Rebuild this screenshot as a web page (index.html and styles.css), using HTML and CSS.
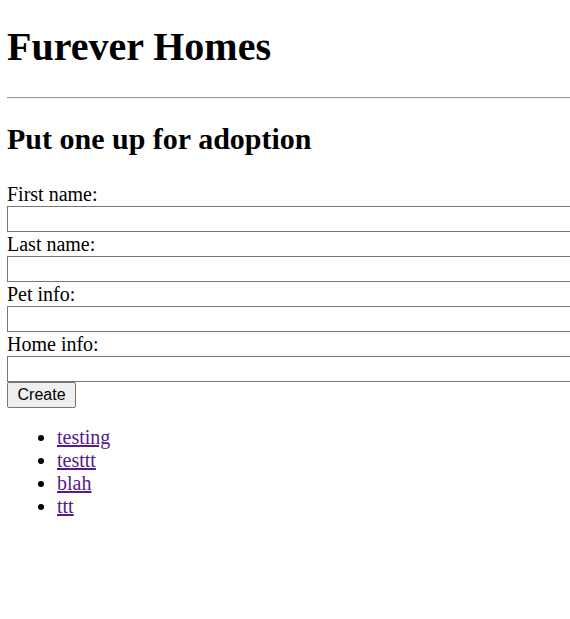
FILE: index.html
```html
<!DOCTYPE html>
<html>
<head>
<meta charset="utf-8">
<title>Furever Homes</title>
<link rel="stylesheet" href="styles.css">
</head>
<body>
<h1 class="title">Furever Homes</h1>
<hr class="rule">
<h2 class="subtitle">Put one up for adoption</h2>
<form class="form">
<label class="label">First name:</label>
<input type="text" class="field">
<label class="label">Last name:</label>
<input type="text" class="field">
<label class="label">Pet info:</label>
<input type="text" class="field">
<label class="label">Home info:</label>
<input type="text" class="field">
<button type="button" class="btn">Create</button>
</form>
<ul class="list">
<li class="item"><a class="link" href="#">testing</a></li>
<li class="item"><a class="link" href="#">testtt</a></li>
<li class="item"><a class="link" href="#">blah</a></li>
<li class="item"><a class="link" href="#">ttt</a></li>
</ul>
</body>
</html>
```
FILE: styles.css
```css
html { overflow: hidden; background: #fff; }
body {
  font-family: "Liberation Serif", "Times New Roman", serif;
  font-size: 20px;
  color: #000;
  margin: 7px 0 0 7px;
}
.title {
  font-size: 40px;
  line-height: 46px;
  font-weight: bold;
  margin: 16.5px 0 27.5px;
}
.rule {
  margin: 0;
  border: none;
  border-top: 1px solid #9a9a9a;
  border-bottom: 1px solid #eeeeee;
  height: 0;
}
.subtitle {
  font-size: 30px;
  line-height: 34.5px;
  font-weight: bold;
  margin: 22.5px 0 25.5px;
}
.form {
  margin: 0;
}
.label {
  display: block;
  line-height: 24px;
}
.field {
  display: block;
  box-sizing: border-box;
  width: calc(100% + 6px);
  height: 26px;
  margin: 0;
  padding: 1px 3px;
  border: 1px solid #767676;
  border-radius: 0;
  font-size: 16px;
  font-family: "Liberation Sans", Arial, sans-serif;
  background: #fff;
}
.btn {
  display: block;
  box-sizing: border-box;
  height: 26px;
  padding: 0 9.5px;
  margin: 0;
  border: 1px solid #767676;
  border-radius: 2px;
  background: #efefef;
  color: #000;
  font-size: 16px;
  font-family: "Liberation Sans", Arial, sans-serif;
}
.list {
  margin: 18px 0 0;
  padding-left: 50px;
}
.item {
  line-height: 23px;
}
.link { color: #551a8b; }
```
